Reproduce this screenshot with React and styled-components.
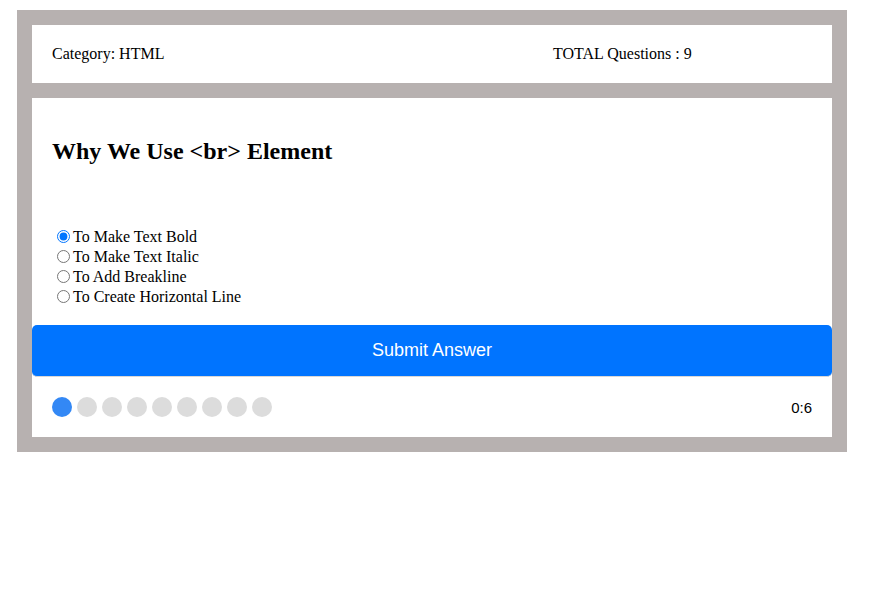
import React, { useState } from 'react';
import styled, { createGlobalStyle } from 'styled-components';

const GlobalStyle = createGlobalStyle`
  body {
    margin: 0;
    font-family: "Liberation Serif", "Times New Roman", serif;
    font-size: 16px;
    color: #000;
    background: #fff;
  }
`;

const QuizFrame = styled.div`
  width: 800px;
  margin: 10px 0 0 17px;
  padding: 15px;
  background: #b7b1b0;
  display: flex;
  flex-direction: column;
  gap: 15px;
`;

const InfoBar = styled.div`
  background: #fff;
  padding: 20px;
  display: grid;
  grid-template-columns: 501px 1fr;
  line-height: 18px;
`;

const QuestionCard = styled.div`
  background: #fff;
  display: flex;
  flex-direction: column;
`;

const QuestionBody = styled.div`
  padding: 20px 20px 18px;
`;

const QuestionTitle = styled.h2`
  font-size: 24px;
  font-weight: bold;
  margin: 19px 0 62px;
  line-height: 28px;
`;

const OptionList = styled.div`
  display: flex;
  flex-direction: column;
`;

const Option = styled.label`
  display: flex;
  align-items: center;
  height: 20px;
  line-height: 20px;
  cursor: pointer;
`;

const Radio = styled.input`
  margin: 0 3px 2px 5px;
  width: 13px;
  height: 13px;
`;

const SubmitButton = styled.button`
  height: 52px;
  border: none;
  border-bottom: 1px solid #d8d8d8;
  border-radius: 5px;
  background: #0074ff;
  color: #fff;
  font-family: "Liberation Sans", Arial, sans-serif;
  font-size: 18px;
  cursor: pointer;
`;

const Footer = styled.div`
  display: flex;
  align-items: center;
  justify-content: space-between;
  padding: 20px;
`;

const Dots = styled.div`
  display: flex;
  gap: 5px;
`;

const Dot = styled.span`
  width: 20px;
  height: 20px;
  border-radius: 50%;
  background: ${p => (p.$active ? '#3388f5' : '#dcdcdc')};
`;

const Timer = styled.span`
  font-family: "Liberation Sans", Arial, sans-serif;
  font-size: 15px;
`;

const options = [
  'To Make Text Bold',
  'To Make Text Italic',
  'To Add Breakline',
  'To Create Horizontal Line',
];

export default function App() {
  const [selected, setSelected] = useState(0);

  return (
    <>
      <GlobalStyle />
      <QuizFrame>
        <InfoBar>
          <span>Category: HTML</span>
          <span>TOTAL Questions : 9</span>
        </InfoBar>
        <QuestionCard>
          <QuestionBody>
            <QuestionTitle>Why We Use &lt;br&gt; Element</QuestionTitle>
            <OptionList>
              {options.map((opt, i) => (
                <Option key={opt}>
                  <Radio
                    type="radio"
                    name="answer"
                    checked={selected === i}
                    onChange={() => setSelected(i)}
                  />
                  {opt}
                </Option>
              ))}
            </OptionList>
          </QuestionBody>
          <SubmitButton>Submit Answer</SubmitButton>
          <Footer>
            <Dots>
              {Array.from({ length: 9 }).map((_, i) => (
                <Dot key={i} $active={i === 0} />
              ))}
            </Dots>
            <Timer>0:6</Timer>
          </Footer>
        </QuestionCard>
      </QuizFrame>
    </>
  );
}
